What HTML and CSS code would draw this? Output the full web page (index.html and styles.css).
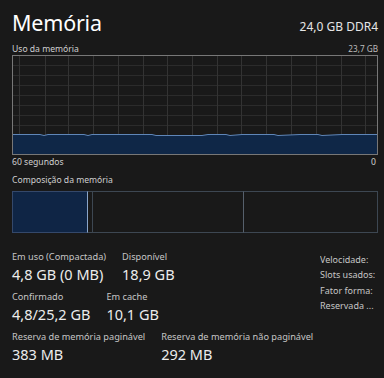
FILE: index.html
```html
<!DOCTYPE html>
<html lang="pt">
<head>
<meta charset="utf-8">
<link rel="stylesheet" href="styles.css">
</head>
<body>
<div class="page">
  <header class="head">
    <h1 class="title">Memória</h1>
    <div class="spec">24,0 GB DDR4</div>
  </header>
  <div class="graph-top">
    <span>Uso da memória</span>
    <span>23,7 GB</span>
  </div>
  <div class="graph">
    <svg width="366" height="100" viewBox="0 0 366 100">
      <g stroke="#2b2b2b" stroke-width="1">
        <line x1="0" y1="10.5" x2="366" y2="10.5"/>
        <line x1="0" y1="20.5" x2="366" y2="20.5"/>
        <line x1="0" y1="30.5" x2="366" y2="30.5"/>
        <line x1="0" y1="40.5" x2="366" y2="40.5"/>
        <line x1="0" y1="50.5" x2="366" y2="50.5"/>
        <line x1="0" y1="60.5" x2="366" y2="60.5"/>
        <line x1="0" y1="70.5" x2="366" y2="70.5"/>
      </g>
      <g stroke="#333333" stroke-width="1">
        <line x1="7.5" y1="0" x2="7.5" y2="100"/>
        <line x1="33.5" y1="0" x2="33.5" y2="100"/>
        <line x1="56.5" y1="0" x2="56.5" y2="100"/>
        <line x1="81.5" y1="0" x2="81.5" y2="100"/>
        <line x1="106.5" y1="0" x2="106.5" y2="100"/>
        <line x1="131.5" y1="0" x2="131.5" y2="100"/>
        <line x1="155.5" y1="0" x2="155.5" y2="100"/>
        <line x1="180.5" y1="0" x2="180.5" y2="100"/>
        <line x1="205.5" y1="0" x2="205.5" y2="100"/>
        <line x1="229.5" y1="0" x2="229.5" y2="100"/>
        <line x1="254.5" y1="0" x2="254.5" y2="100"/>
        <line x1="279.5" y1="0" x2="279.5" y2="100"/>
        <line x1="304.5" y1="0" x2="304.5" y2="100"/>
        <line x1="329.5" y1="0" x2="329.5" y2="100"/>
        <line x1="353.5" y1="0" x2="353.5" y2="100"/>
      </g>
      <path d="M0 79.5 L28 79.5 L32 80.5 L36 79.5 L72 79.5 L76 80.5 L80 79.5 L140 79.5 L144 80.5 L190 80.5 L196 79.5 L214 79.5 L218 80.5 L230 79.5 L262 79.5 L266 80.5 L288 79.5 L306 79.5 L310 80.5 L330 79.5 L366 79.5 L366 100 L0 100 Z" fill="#0f2747"/>
      <path d="M0 79.5 L28 79.5 L32 80.5 L36 79.5 L72 79.5 L76 80.5 L80 79.5 L140 79.5 L144 80.5 L190 80.5 L196 79.5 L214 79.5 L218 80.5 L230 79.5 L262 79.5 L266 80.5 L288 79.5 L306 79.5 L310 80.5 L330 79.5 L366 79.5" fill="none" stroke="#5f86b8" stroke-width="1"/>
    </svg>
  </div>
  <div class="axis">
    <span>60 segundos</span>
    <span>0</span>
  </div>
  <div class="comp-label">Composição da memória</div>
  <div class="comp">
    <div class="seg inuse"></div>
    <div class="seg modified"></div>
    <div class="seg standby"></div>
    <div class="seg free"></div>
  </div>
  <div class="stats">
    <div class="stats-main">
      <div class="row">
        <div class="stat"><div class="lbl">Em uso (Compactada)</div><div class="val">4,8 GB (0 MB)</div></div>
        <div class="stat"><div class="lbl">Disponível</div><div class="val">18,9 GB</div></div>
      </div>
      <div class="row">
        <div class="stat"><div class="lbl">Confirmado</div><div class="val">4,8/25,2 GB</div></div>
        <div class="stat"><div class="lbl">Em cache</div><div class="val">10,1 GB</div></div>
      </div>
      <div class="row">
        <div class="stat"><div class="lbl">Reserva de memória paginável</div><div class="val">383 MB</div></div>
        <div class="stat"><div class="lbl">Reserva de memória não paginável</div><div class="val">292 MB</div></div>
      </div>
    </div>
    <ul class="props">
      <li>Velocidade:</li>
      <li>Slots usados:</li>
      <li>Fator forma:</li>
      <li>Reservada ...</li>
    </ul>
  </div>
</div>
</body>
</html>
```
FILE: styles.css
```css
html, body {
  margin: 0;
  padding: 0;
  background: #191919;
}
body {
  font-family: "Segoe UI", "Noto Sans", "Open Sans", sans-serif;
  color: #e8e8e8;
  width: 384px;
  height: 378px;
  overflow: hidden;
}
.page {
  padding: 0 6px 0 12px;
}
.head {
  display: flex;
  justify-content: space-between;
  align-items: baseline;
  height: 41px;
}
.title {
  margin: 0;
  font-weight: 400;
  font-size: 21.5px;
  letter-spacing: -0.2px;
  line-height: 28px;
  padding-top: 9px;
  color: #ffffff;
}
.spec {
  font-size: 12px;
  color: #e6e6e6;
}
.graph-top {
  display: flex;
  justify-content: space-between;
  align-items: flex-end;
  height: 14px;
  font-size: 8.6px;
  line-height: 12px;
  color: #d0d0d0;
}
.graph-top span:last-child {
  font-size: 8.2px;
  color: #bdbdbd;
}
.graph {
  border: 1px solid #777777;
  overflow: hidden;
  box-sizing: border-box;
  width: 366px;
  height: 100px;
}
.graph svg {
  display: block;
  margin: -1px 0 0 -1px;
}
.axis {
  display: flex;
  justify-content: space-between;
  font-size: 8.6px;
  line-height: 14px;
  color: #d0d0d0;
  padding-right: 2px;
}
.comp-label {
  font-size: 8.6px;
  line-height: 12px;
  margin-top: 5px;
  color: #d0d0d0;
}
.comp {
  display: flex;
  margin-top: 5px;
  height: 42px;
  width: 366px;
}
.seg {
  box-sizing: border-box;
  border: 1px solid #3d4752;
  height: 100%;
}
.inuse {
  width: 76px;
  background: #0f2545;
  border-color: #34486a;
  border-right: 1px solid #8aa5c8;
}
.modified {
  width: 4px;
  border-left: none;
  border-right: none;
  background: #191919;
}
.standby {
  width: 152px;
  border-right: 1px solid #56606c;
}
.free {
  flex: 1;
  border-left: none;
}
.stats {
  display: flex;
  margin-top: 17px;
}
.stats-main {
  flex: 1;
  min-width: 0;
  display: flex;
  flex-direction: column;
  gap: 6px;
}
.row {
  display: flex;
  gap: 16px;
  white-space: nowrap;
}
.lbl {
  font-size: 9.2px;
  line-height: 14px;
  color: #c6c6c6;
}
.val {
  font-size: 14.5px;
  line-height: 20px;
  color: #ececec;
}
.props {
  list-style: none;
  margin: 0;
  padding: 0;
  width: 58px;
  flex: none;
  overflow: hidden;
  white-space: nowrap;
  font-size: 9px;
  line-height: 15.3px;
  color: #c6c6c6;
  margin-top: 2px;
}
```
